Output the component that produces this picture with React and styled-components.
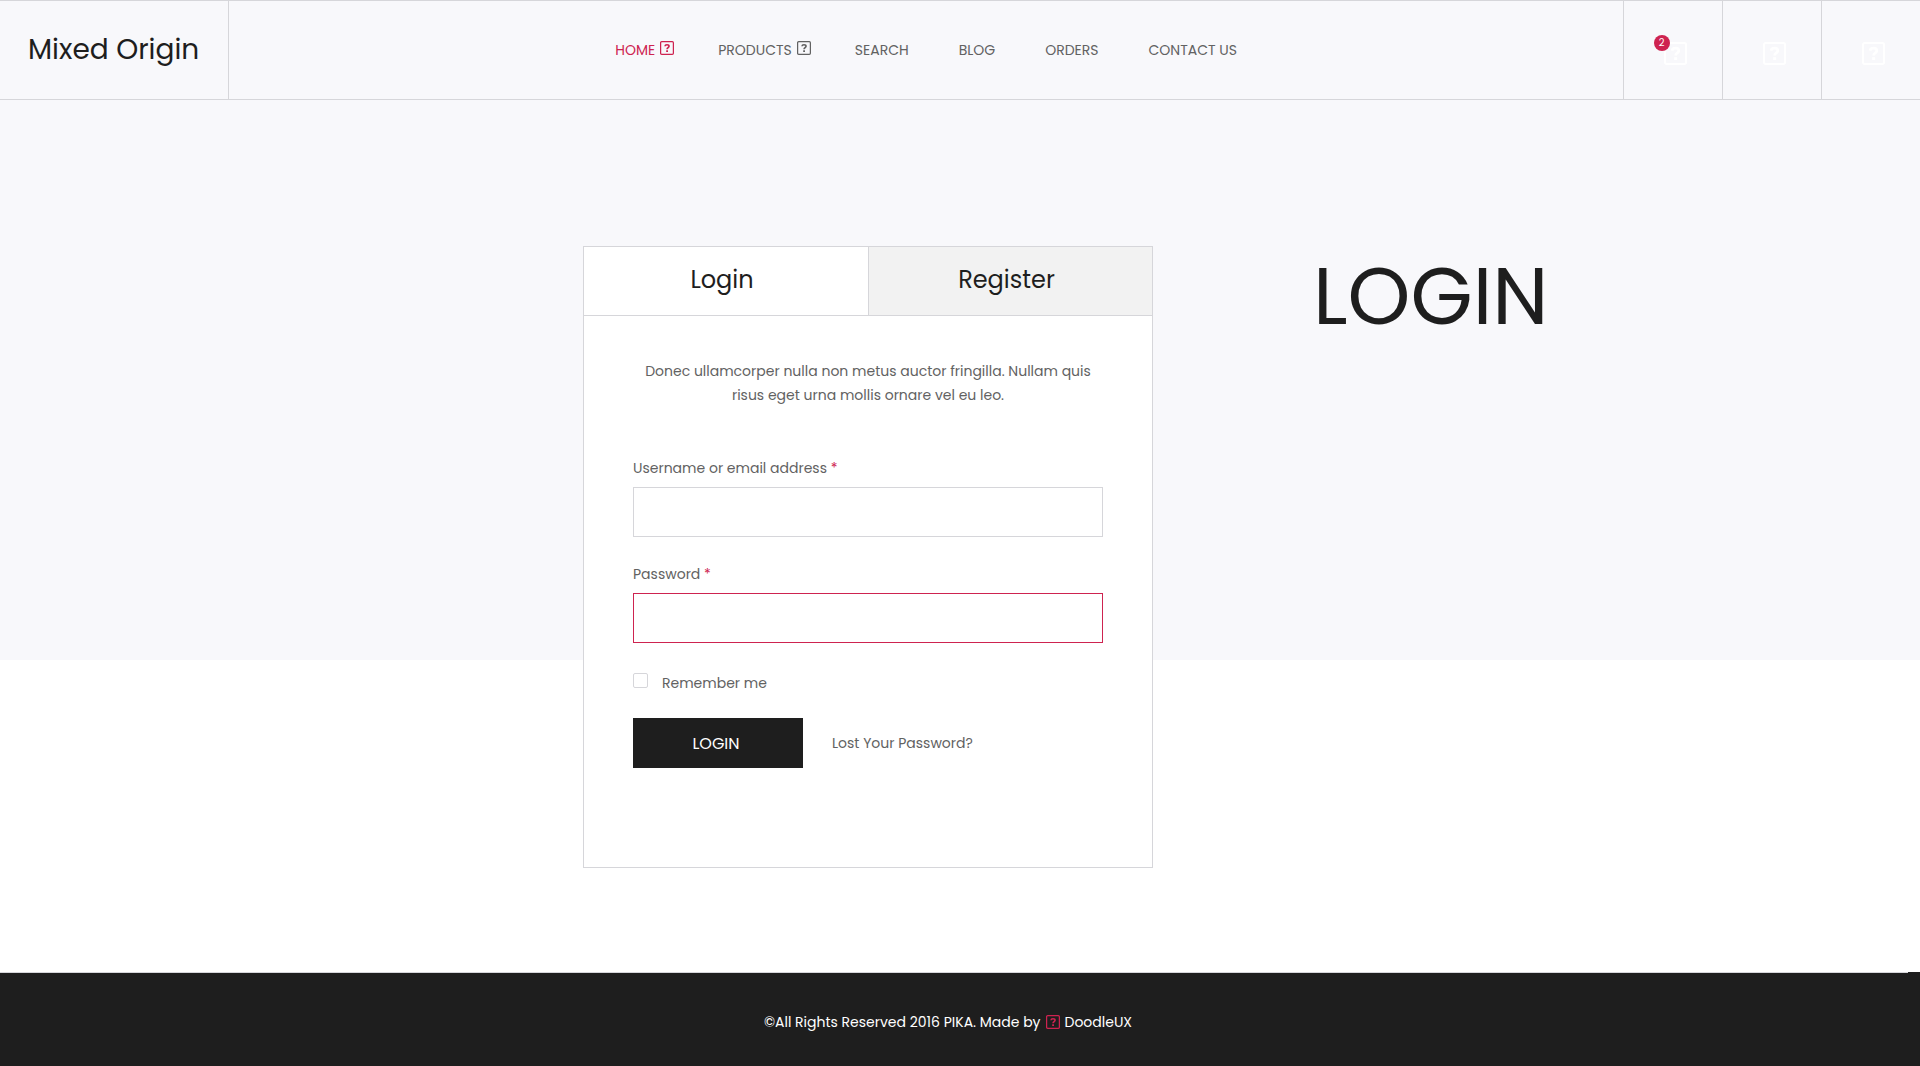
import React from "react";
import styled, { createGlobalStyle } from "styled-components";

const ink = "#1e1e1e";
const grey = "#626262";
const accent = "#ce2350";
const line = "#d6d6da";
const pale = "#f8f8fb";

const GlobalStyle = createGlobalStyle`
  *, *::before, *::after { box-sizing: border-box; }
  body {
    margin: 0;
    background: #fff;
    color: ${grey};
    font: 400 14px/24px Poppins, Inter, "Open Sans", sans-serif;
  }
  a { color: inherit; text-decoration: none; }
  button, input { font: inherit; }
`;

const Page = styled.div`
  min-height: 100vh;
  display: flex;
  flex-direction: column;
`;

const Header = styled.header`
  display: flex;
  height: 100px;
  background: ${pale};
  border-top: 1px solid ${line};
  border-bottom: 1px solid ${line};
`;

const Logo = styled.a`
  display: flex;
  align-items: center;
  padding: 0 29px 0 28px;
  border-right: 1px solid ${line};
  color: ${ink};
  font-size: 28px;
  line-height: 40px;
  white-space: nowrap;
`;

const Nav = styled.nav`
  flex: 1;
  display: flex;
  align-items: center;
  justify-content: center;
  gap: 50px;
`;

const NavLink = styled.a`
  display: flex;
  align-items: center;
  gap: 5px;
  color: ${(p) => (p.$active ? accent : grey)};
  white-space: nowrap;

  svg { margin: 0 -6px 4px 0; }
`;

const Tools = styled.div`
  display: flex;
`;

const Tool = styled.button`
  width: 99px;
  padding: 7px 0 0 4px;
  display: flex;
  align-items: center;
  justify-content: center;
  border: 0;
  border-left: 1px solid ${line};
  background: none;
  color: #fff;
`;

const ToolIcon = styled.span`
  position: relative;
  display: flex;
`;

const Badge = styled.span`
  position: absolute;
  left: -10px;
  top: -7px;
  width: 16px;
  height: 16px;
  border-radius: 50%;
  background: ${accent};
  color: #fff;
  font-size: 10px;
  line-height: 16px;
  text-align: center;
`;

const Main = styled.main`
  flex: 1;
  padding: 146px 15px 104px;
  background: linear-gradient(${pale} 560px, #fff 560px);
`;

const Container = styled.div`
  max-width: 1170px;
  margin: 0 auto;
  display: grid;
  grid-template-columns: 208px minmax(0, 570px) minmax(0, 1fr);
  align-items: start;
`;

const Card = styled.section`
  grid-column: 2;
  border: 1px solid ${line};
  background: #fff;
`;

const Tabs = styled.div`
  display: grid;
  grid-template-columns: 1fr 1fr;
  border-bottom: 1px solid ${line};
`;

const Tab = styled.button`
  height: 68px;
  padding: 0 8px 2px 0;
  border: 0;
  background: ${(p) => (p.$active ? "#fff" : "#f2f2f2")};
  color: ${ink};
  font-size: 24px;
  line-height: 32px;

  & + & { border-left: 1px solid ${line}; }
`;

const Form = styled.form`
  padding: 43px 49px 99px;
`;

const Intro = styled.p`
  margin: 0 0 47px;
  text-align: center;
`;

const Field = styled.div`
  margin-bottom: 23px;
`;

const Label = styled.label`
  display: block;
  margin-bottom: 5px;
  line-height: 28px;
`;

const Required = styled.span`
  color: ${accent};
`;

const TextInput = styled.input`
  display: block;
  width: 100%;
  height: 50px;
  padding: 0 16px;
  border: 1px solid ${(p) => (p.$invalid ? accent : line)};
  border-radius: 0;
  background: #fff;
  color: ${ink};
  outline: none;
`;

const Remember = styled.label`
  display: flex;
  align-items: center;
  gap: 14px;
  margin: 28px 0 23px;
`;

const Checkbox = styled.input`
  appearance: none;
  width: 15px;
  height: 15px;
  margin: 0 0 5px;
  border: 1px solid ${line};
  border-radius: 2px;
  background: #fff;
`;

const Actions = styled.div`
  display: flex;
  align-items: center;
  gap: 29px;
`;

const Submit = styled.button`
  width: 170px;
  height: 50px;
  padding: 2px 4px 0 0;
  border: 0;
  background: ${ink};
  color: #fff;
  font-size: 16px;
`;

const Title = styled.h1`
  margin: 0;
  padding-left: 160px;
  color: ${ink};
  font-size: 80px;
  font-weight: 400;
  line-height: 100px;
  white-space: nowrap;
`;

const Footer = styled.footer`
  display: flex;
  align-items: center;
  justify-content: center;
  gap: 5px;
  height: 94px;
  padding: 6px 24px 0 0;
  background: linear-gradient(${line}, ${line}) 0 0 / calc(100% - 12px) 1px no-repeat ${ink};
  color: #fff;
`;

function Glyph({ size, color = "currentColor" }) {
  return (
    <svg width={size} height={size} viewBox="0 0 16 16" fill="none" stroke={color} aria-hidden="true">
      <rect x="0.7" y="0.7" width="14.6" height="14.6" rx="1.2" strokeWidth="1.4" />
      <path d="M5.700 6C5.800 4.900 6.700 4.300 8 4.300c1.400 0 2.300.7 2.300 1.700 0 1.600-2.200 1.500-2.200 3.400" strokeWidth="1.900" />
      <path d="M8.100 10.600v2" strokeWidth="2.100" />
    </svg>
  );
}

const links = [
  { label: "HOME", active: true, icon: true },
  { label: "PRODUCTS", icon: true },
  { label: "SEARCH" },
  { label: "BLOG" },
  { label: "ORDERS" },
  { label: "CONTACT US" },
];

export default function App() {
  return (
    <Page>
      <GlobalStyle />
      <Header>
        <Logo href="#">Mixed Origin</Logo>
        <Nav>
          {links.map((l) => (
            <NavLink key={l.label} href="#" $active={l.active}>
              {l.label}
              {l.icon && <Glyph size={14} />}
            </NavLink>
          ))}
        </Nav>
        <Tools>
          <Tool type="button" aria-label="Cart">
            <ToolIcon>
              <Glyph size={23} />
              <Badge>2</Badge>
            </ToolIcon>
          </Tool>
          <Tool type="button" aria-label="Search"><Glyph size={23} /></Tool>
          <Tool type="button" aria-label="Menu"><Glyph size={23} /></Tool>
        </Tools>
      </Header>

      <Main>
        <Container>
          <Card>
            <Tabs role="tablist">
              <Tab type="button" role="tab" aria-selected="true" $active>Login</Tab>
              <Tab type="button" role="tab" aria-selected="false">Register</Tab>
            </Tabs>
            <Form>
              <Intro>
                Donec ullamcorper nulla non metus auctor fringilla. Nullam quis risus eget urna mollis ornare vel eu leo.
              </Intro>
              <Field>
                <Label htmlFor="username">Username or email address <Required>*</Required></Label>
                <TextInput id="username" type="text" />
              </Field>
              <Field>
                <Label htmlFor="password">Password <Required>*</Required></Label>
                <TextInput id="password" type="password" $invalid />
              </Field>
              <Remember htmlFor="remember">
                <Checkbox id="remember" type="checkbox" />
                Remember me
              </Remember>
              <Actions>
                <Submit type="submit">LOGIN</Submit>
                <a href="#">Lost Your Password?</a>
              </Actions>
            </Form>
          </Card>
          <Title>LOGIN</Title>
        </Container>
      </Main>

      <Footer>
        <span>©All Rights Reserved 2016 PIKA. Made by</span>
        <Glyph size={14} color={accent} />
        <a href="#">DoodleUX</a>
      </Footer>
    </Page>
  );
}
